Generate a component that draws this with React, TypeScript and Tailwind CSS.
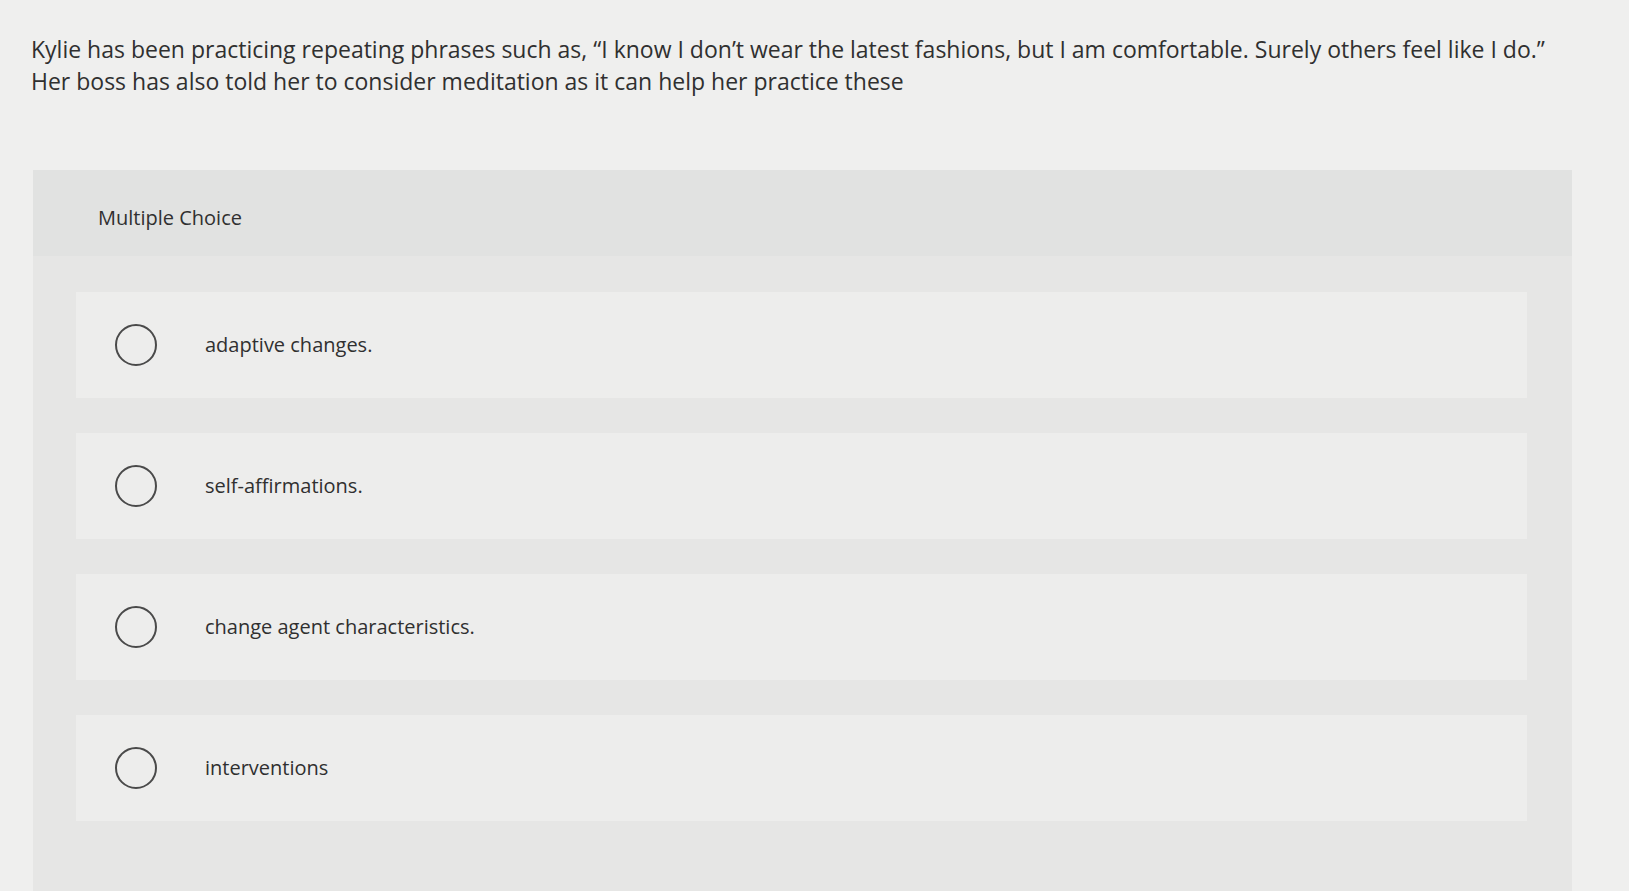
import React from 'react';

const options = [
  'adaptive changes.',
  'self-affirmations.',
  'change agent characteristics.',
  'interventions',
];

const OptionRow: React.FC<{ label: string }> = ({ label }) => (
  <div className="flex items-center h-[106px] bg-[#ededec] pl-[39px]">
    <span className="w-[42px] h-[42px] rounded-full border-2 border-[#4a4a4a] shrink-0" />
    <span className="ml-[48px] text-[20px] text-[#303030]">{label}</span>
  </div>
);

export default function App() {
  return (
    <div
      className="min-h-[891px] w-full bg-[#efefee] overflow-hidden"
      style={{ fontFamily: '"Open Sans", "Liberation Sans", Arial, sans-serif' }}
    >
      <p className="pl-[31px] pr-[8px] pt-[33px] text-[23px] leading-[32px] text-[#303030] whitespace-nowrap">
        Kylie has been practicing repeating phrases such as, “I know I don’t wear the latest fashions, but I am comfortable. Surely others feel like I do.”
        <br />
        Her boss has also told her to consider meditation as it can help her practice these
      </p>

      <div className="mt-[73px] ml-[33px] mr-[57px] bg-[#e6e6e5] min-h-[760px]">
        <div className="h-[86px] bg-[#e1e2e1] pl-[65px] pt-[33px] text-[20px] text-[#303030]">
          Multiple Choice
        </div>
        <div className="flex flex-col gap-[35px] pt-[36px] pl-[43px] pr-[45px]">
          {options.map(o => (
            <OptionRow key={o} label={o} />
          ))}
        </div>
      </div>
    </div>
  );
}
